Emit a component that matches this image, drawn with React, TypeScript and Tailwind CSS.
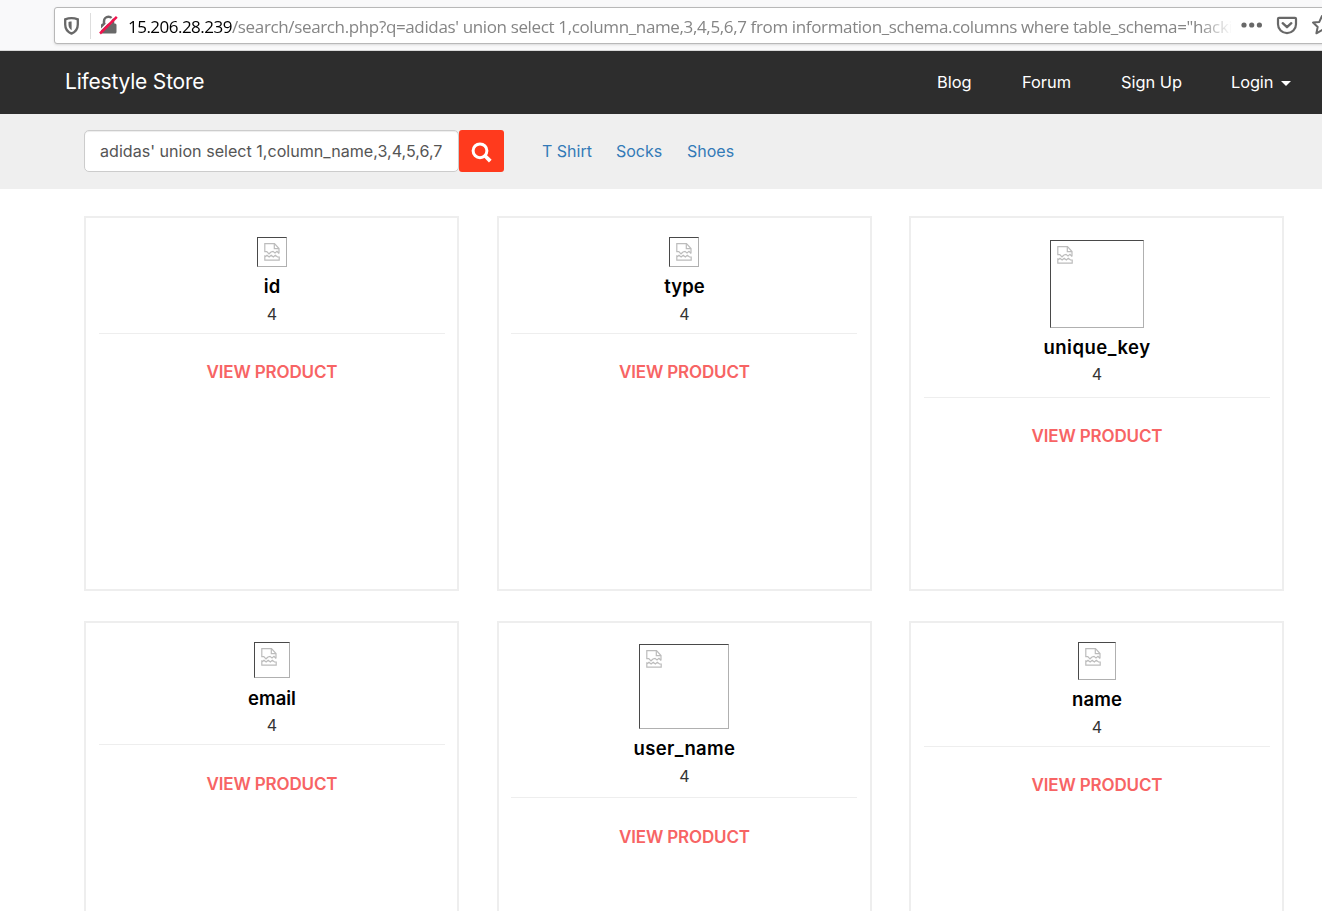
import React from "react";

type Product = {
  name: string;
  layout: string;
  frame: string;
  title: string;
  price: string;
  rule: string;
  link: string;
};

const products: Product[] = [
  { name: "id", layout: "pt-[19px]", frame: "h-[30px] w-[30px]", title: "mt-[7px]", price: "mt-[6px]", rule: "mt-[9px]", link: "mt-[28px]" },
  { name: "type", layout: "pt-[19px]", frame: "h-[30px] w-[30px]", title: "mt-[7px]", price: "mt-[6px]", rule: "mt-[9px]", link: "mt-[28px]" },
  { name: "unique_key", layout: "pt-[22px]", frame: "h-[88px] w-[94px]", title: "mt-[7px] tracking-[0.5px]", price: "mt-[5px]", rule: "mt-[13px]", link: "mt-[28px]" },
  { name: "email", layout: "pt-[19px]", frame: "h-[36px] w-[36px]", title: "mt-[8px]", price: "mt-[5px]", rule: "mt-[9px]", link: "mt-[29px]" },
  { name: "user_name", layout: "pt-[21px]", frame: "h-[85px] w-[90px]", title: "mt-[7px] tracking-[0.35px]", price: "mt-[6px]", rule: "mt-[11px]", link: "mt-[29px]" },
  { name: "name", layout: "pt-[19px]", frame: "h-[38px] w-[38px]", title: "mt-[7px] tracking-[0.1px]", price: "mt-[6px]", rule: "mt-[9px]", link: "mt-[28px]" },
];

function BrokenImage({ size }: { size: string }) {
  return (
    <div className={`shrink-0 border border-t-[#494949] border-l-[#494949] border-r-[#b0b0b0] border-b-[#b0b0b0] pt-[5px] pl-[6px] ${size}`}>
      <svg width="16" height="18" viewBox="0 0 16 18" fill="none" stroke="#bcbcbc" strokeWidth="1.2">
        <path d="M15 10.500V5.500L10.500.7H.8V8.600H2.800L5 10.800 7 9 9 8.400 11 10 13 8.400 15 10.500" />
        <path d="M10.300.7v5H15" />
        <path d="M.8 12.200v5H15.200v-3.200H13.500L11.300 12.200 9.300 14 7.200 12.200 5.100 14 3 12.200 .8 14" />
      </svg>
    </div>
  );
}

function ProductCard({ p }: { p: Product }) {
  return (
    <div className={`flex h-[375px] w-[375px] flex-col items-center border-2 border-[#eeeeee] ${p.layout}`}>
      <BrokenImage size={p.frame} />
      <div className={`h-6 pl-px text-[18.5px] leading-6 font-semibold text-black ${p.title}`}>{p.name}</div>
      <div className={`h-5 pl-px text-[16px] leading-5 text-[#333] ${p.price}`}>4</div>
      <div className={`h-px w-[346px] bg-[#eeeeee] ${p.rule}`} />
      <a className={`h-5 pl-px text-[17px] leading-5 font-semibold tracking-[-0.15px] text-[#f76464] ${p.link}`}>VIEW PRODUCT</a>
    </div>
  );
}

function AddressBar() {
  return (
    <div className="h-[51px] border-b border-[#d8d8d8] bg-[#f9f9fa] pt-[7px] pl-[54px]">
      <div className="flex h-[37px] w-[1300px] items-center rounded-[3px] border border-[#b8b8b8] bg-white shadow-sm">
        <svg className="ml-[8px] shrink-0" width="17" height="18" viewBox="0 0 17 18" fill="none">
          <path d="M8.500 1.200c2.200 0 4.400.4 6.300 1.100v5.200c0 4.500-2.500 7.500-6.300 9.100-3.800-1.600-6.300-4.600-6.300-9.100V2.300c1.900-.7 4.100-1.100 6.300-1.100z" stroke="#686868" strokeWidth="2.300" />
          <path d="M8.600 4.600v8.600C6.400 11.900 5.500 10 5.500 7.600V5c1-.3 2-.4 3.100-.4z" fill="#686868" />
        </svg>
        <div className="ml-[10px] h-[26px] w-px shrink-0 bg-[#dddddd]" />
        <svg className="mb-px ml-[8px] shrink-0" width="19" height="20" viewBox="0 0 19 20" fill="none">
          <path d="M5 9V6.300a4.500 4.500 0 0 1 9 0V9" stroke="#686868" strokeWidth="2.500" />
          <rect x="2" y="8.500" width="15.500" height="10" rx="1.500" fill="#686868" />
          <path d="M-.5 17 16.300.3" stroke="#fff" strokeWidth="1.500" />
          <path d="M1 18.500 17.800 1.800" stroke="#f0134d" strokeWidth="2.500" />
        </svg>
        <div className="mt-[2px] ml-[10px] flex h-7 w-[1104px] shrink-0 [mask-image:linear-gradient(to_right,#000_97%,transparent)] font-['Open_Sans',sans-serif] text-[17px] leading-7 whitespace-nowrap text-[#858585]">
          <span className="w-[104px] shrink-0 tracking-[-0.52px] text-black">15.206.28.239</span>
          <span className="tracking-[-0.36px]">/search/search.php?q=adidas' union select 1,column_name,3,4,5,6,7 from information_schema.columns where table_schema="hackin</span>
        </div>
        <svg className="mb-[2px] ml-[9px] shrink-0" width="22" height="6" fill="#686868">
          <circle cx="3" cy="3" r="2.600" /><circle cx="10.700" cy="3" r="2.600" /><circle cx="18.400" cy="3" r="2.600" />
        </svg>
        <svg className="mb-px ml-[13px] shrink-0" width="22" height="19" viewBox="0 0 22 19" fill="none" stroke="#686868" strokeLinecap="round" strokeLinejoin="round">
          <path d="M3 1.800h16q1 0 1 1v5.400a9 9 0 0 1-18 0V2.800q0-1 1-1z" strokeWidth="2.200" />
          <path d="m6.700 7.200 4.300 4 4.300-4" strokeWidth="2.400" />
        </svg>
        <svg className="mb-px ml-[13px] shrink-0" width="22" height="22" viewBox="0 0 22 22" fill="none" stroke="#686868" strokeWidth="2" strokeLinejoin="round">
          <path d="m11 2 2.700 5.900 6.300.7-4.700 4.300 1.300 6.400L11 16l-5.600 3.300 1.300-6.400L2 8.600l6.300-.7z" />
        </svg>
      </div>
    </div>
  );
}

export default function App() {
  return (
    <div className="h-[911px] w-[1322px] overflow-hidden bg-white font-['Inter',sans-serif] whitespace-nowrap">
      <AddressBar />
      <nav className="flex h-[63px] items-center bg-[#2d2d2d] pl-[65px] text-[16.4px] text-white">
        <div className="w-[872px] pb-[2px] text-[21px] leading-6 tracking-[-0.2px]">Lifestyle Store</div>
        <a className="w-[85px]">Blog</a>
        <a className="w-[99px]">Forum</a>
        <a className="w-[110px]">Sign Up</a>
        <a className="w-[50px] tracking-[-0.1px]">Login</a>
        <svg className="mt-[2px] shrink-0" width="10" height="5" fill="#fff"><path d="M0 0h10L5 5z" /></svg>
      </nav>
      <div className="flex h-[75px] items-start bg-[#efefef] pt-[16px] pl-[84px]">
        <div className="flex h-[42px] w-[375px] items-center rounded-[5px] border border-[#cccccc] bg-white pl-[15px] text-[16.1px] text-[#555] shadow-[inset_0_1px_1px_rgba(0,0,0,0.075)]">
          adidas' union select 1,column_name,3,4,5,6,7
        </div>
        <button className="flex h-[42px] w-[45px] items-center justify-center rounded-[3px] bg-[#ff3a1d]">
          <svg className="mt-[2px]" width="21" height="21" viewBox="0 0 21 21" fill="none" stroke="#fff">
            <circle cx="9" cy="8.800" r="6.900" strokeWidth="3" />
            <path d="m13.700 13.500 5.600 5.600" strokeWidth="3.800" />
          </svg>
        </button>
        <div className="flex h-[42px] items-center pl-[38px] text-[16px] text-[#337ab7]">
          <a className="w-[74px]">T Shirt</a>
          <a className="w-[71px]">Socks</a>
          <a>Shoes</a>
        </div>
      </div>
      <main className="grid grid-cols-[repeat(3,375px)] gap-x-[37.5px] gap-y-[30px] pt-[27px] pl-[84px]">
        {products.map((p) => (
          <ProductCard key={p.name} p={p} />
        ))}
      </main>
    </div>
  );
}
